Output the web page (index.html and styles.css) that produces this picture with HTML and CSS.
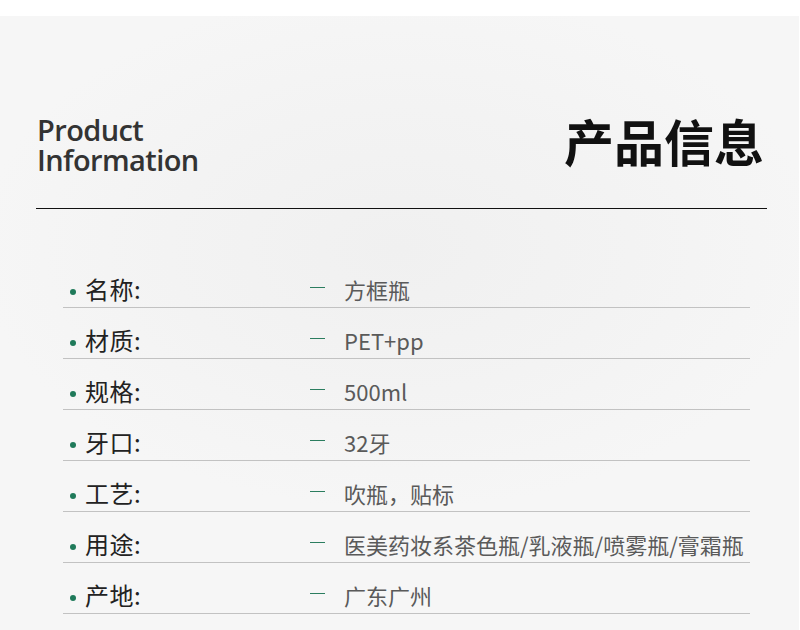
FILE: index.html
```html
<!DOCTYPE html>
<html lang="zh-CN">
<head>
<meta charset="utf-8">
<title>产品信息</title>
<link rel="stylesheet" href="styles.css">
</head>
<body>
<main class="page">
  <header class="header">
    <h2 class="en"><span class="en-line">Product</span><span class="en-line">Information</span></h2>
    <h1 class="cn">产品信息</h1>
  </header>
  <ul class="specs">
    <li class="row"><span class="label"><i class="dot"></i>名称:</span><span class="dash"></span><span class="value">方框瓶</span></li>
    <li class="row"><span class="label"><i class="dot"></i>材质:</span><span class="dash"></span><span class="value">PET+pp</span></li>
    <li class="row"><span class="label"><i class="dot"></i>规格:</span><span class="dash"></span><span class="value">500ml</span></li>
    <li class="row"><span class="label"><i class="dot"></i>牙口:</span><span class="dash"></span><span class="value">32牙</span></li>
    <li class="row"><span class="label"><i class="dot"></i>工艺:</span><span class="dash"></span><span class="value">吹瓶，贴标</span></li>
    <li class="row"><span class="label"><i class="dot"></i>用途:</span><span class="dash"></span><span class="value">医美药妆系茶色瓶/乳液瓶/喷雾瓶/膏霜瓶</span></li>
    <li class="row"><span class="label"><i class="dot"></i>产地:</span><span class="dash"></span><span class="value">广东广州</span></li>
  </ul>
</main>
</body>
</html>
```

FILE: styles.css
```css
* { box-sizing: content-box; }
html, body {
  margin: 0;
  padding: 0;
  background: #ffffff;
}
body {
  font-family: "Noto Sans CJK SC", "Noto Sans", sans-serif;
}
.page {
  margin-top: 16px;
  width: 799px;
  height: 614px;
  background: radial-gradient(ellipse 420px 260px at 50% 38%, #f0f0f0 0%, #f3f3f3 55%, #f6f6f6 100%);
  overflow: hidden;
}
.header {
  margin-left: 36px;
  width: 731px;
  height: 93px;
  padding-top: 99px;
  border-bottom: 1px solid #111;
  display: flex;
  justify-content: space-between;
  align-items: flex-start;
}
.en {
  margin: 0 0 0 1px;
  font-family: "Open Sans", sans-serif;
  font-weight: 600;
  font-size: 29px;
  line-height: 30px;
  color: #333;
  letter-spacing: -0.6px;
}
.en-line {
  display: block;
}
.cn {
  margin: 0 3px 0 0;
  padding-top: 0;
  font-family: "Noto Sans CJK SC", sans-serif;
  font-weight: 700;
  font-size: 50px;
  line-height: 50px;
  color: #111;
}
.specs {
  list-style: none;
  margin: 48px 0 0 63px;
  padding: 0;
  width: 687px;
}
.row {
  display: flex;
  align-items: center;
  padding-top: 17px;
  padding-bottom: 3px;
  height: 30px;
  border-bottom: 1px solid #c2c2c2;
}
.label {
  width: 247px;
  display: flex;
  align-items: center;
  font-size: 24px;
  line-height: 30px;
  color: #222;
  letter-spacing: 0.5px;
}
.dot {
  width: 6px;
  height: 6px;
  border-radius: 50%;
  background: #1f7a5a;
  margin: 5px 9px 0 7px;
}
.dash {
  width: 15px;
  height: 1px;
  border-top: 1px solid #2b7d5f;
  margin-top: -2px;
  margin-right: 19px;
}
.value {
  font-size: 22px;
  line-height: 30px;
  color: #5a5a5a;
}
```
